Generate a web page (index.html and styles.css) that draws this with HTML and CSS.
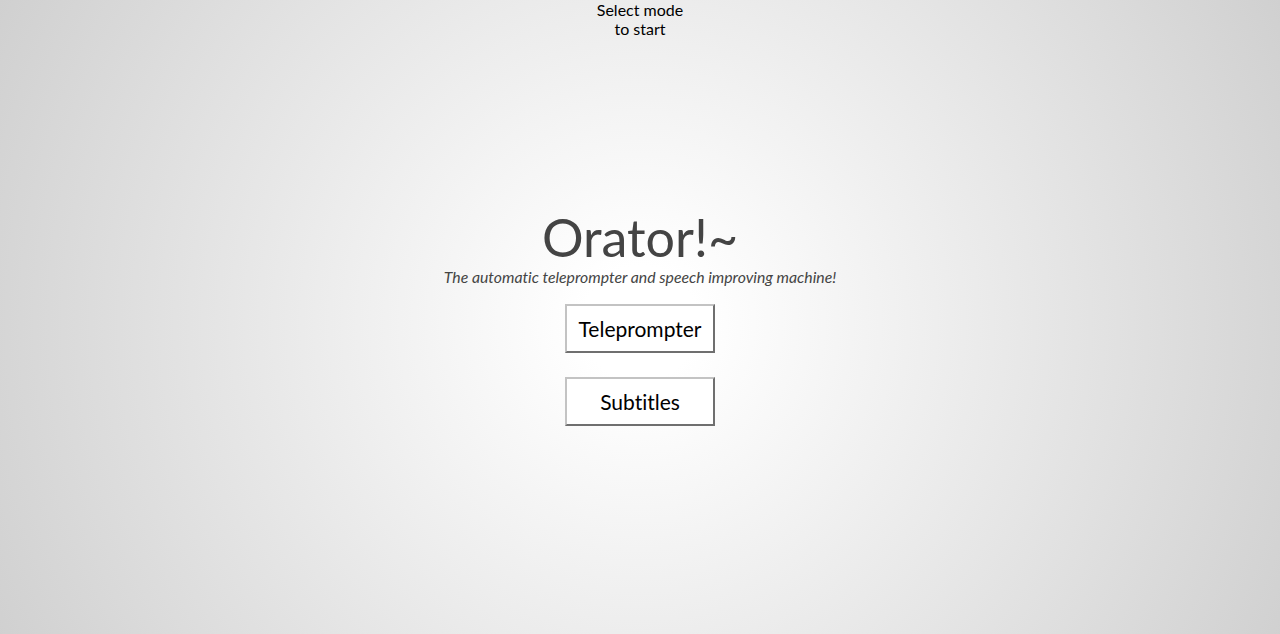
FILE: index.html
```html
<!DOCTYPE html>
<html>
<head>
<meta charset="utf-8">
<title>Orator!~</title>
<link rel="stylesheet" href="styles.css">
</head>
<body>
<div class="page">
  <div class="hint">Select mode to start</div>
  <main class="main">
    <h1 class="title">Orator!~</h1>
    <p class="tagline">The automatic teleprompter and speech improving machine!</p>
    <div class="modes">
      <button class="mode">Teleprompter</button>
      <button class="mode">Subtitles</button>
    </div>
  </main>
</div>
</body>
</html>
```
FILE: styles.css
```css
html, body {
  margin: 0;
  height: 100%;
}
body {
  font-family: Lato, "Open Sans", sans-serif;
  font-variant-ligatures: none;
  background: radial-gradient(circle at 50% 51%, #ffffff 8%, #d0d0d0 100%);
  background-attachment: fixed;
  overflow: hidden;
}
.page {
  height: 634px;
  display: flex;
  flex-direction: column;
  align-items: center;
}
.hint {
  width: 92px;
  text-align: center;
  font-size: 16px;
  line-height: 19px;
  color: #000;
}
.main {
  display: flex;
  flex-direction: column;
  align-items: center;
  margin-top: 168px;
}
.title {
  margin: 0;
  font-size: 52px;
  font-weight: 400;
  line-height: 62px;
  color: #444;
}
.tagline {
  margin: -1px 0 0;
  font-size: 15.8px;
  font-style: italic;
  line-height: 20px;
  color: #444;
}
.modes {
  display: flex;
  flex-direction: column;
  align-items: center;
  gap: 24px;
  margin-top: 17px;
}
.mode {
  width: 150px;
  height: 49px;
  background: #fff;
  font-family: Lato, "Open Sans", sans-serif;
  font-variant-ligatures: none;
  font-size: 21px;
  color: #000;
  border: 2px solid;
  border-color: #c3c3c3 #6f6f6f #6f6f6f #c3c3c3;
  padding: 0;
  border-radius: 0;
}
```
